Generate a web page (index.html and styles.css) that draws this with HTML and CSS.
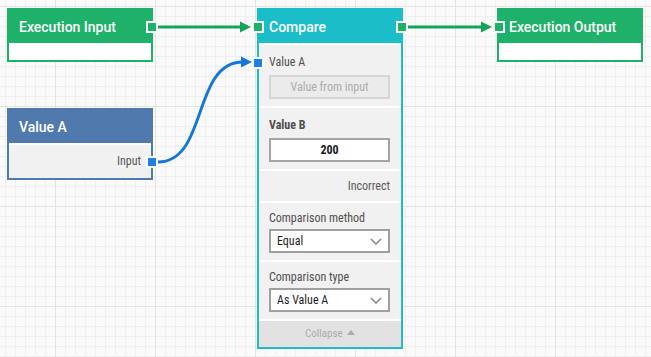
FILE: index.html
```html
<!DOCTYPE html>
<html>
<head>
<meta charset="utf-8">
<link rel="stylesheet" href="styles.css">
</head>
<body>
<div class="canvas">
  <svg class="edges" width="651" height="357" viewBox="0 0 651 357">
    <g class="edge-green">
      <line x1="158" y1="27" x2="243" y2="27"/>
      <polygon points="251,27 240,21.5 240,32.5"/>
      <line x1="408" y1="27" x2="484" y2="27"/>
      <polygon points="492,27 481,21.5 481,32.5"/>
    </g>
    <g class="edge-blue">
      <path d="M158,162 C208,162 192,62 243,62"/>
      <polygon points="252,62 241,56.5 241,67.5"/>
    </g>
  </svg>

  <div class="node node-exec node-exec-in">
    <div class="node-head">Execution Input<span class="port port-out port-green"></span></div>
    <div class="node-body node-body-empty"></div>
  </div>

  <div class="node node-value">
    <div class="node-head">Value A</div>
    <div class="node-body">
      <div class="row row-output">Input<span class="port port-out port-blue"></span></div>
    </div>
  </div>

  <div class="node node-compare">
    <div class="node-head"><span class="port port-in port-green"></span>Compare<span class="port port-out port-green"></span></div>
    <div class="node-body">
      <div class="row row-field">
        <div class="label label-port"><span class="port port-in port-blue"></span>Value A</div>
        <div class="field field-disabled">Value from input</div>
      </div>
      <div class="row row-field">
        <div class="label label-bold">Value B</div>
        <div class="field field-value">200</div>
      </div>
      <div class="row row-result">Incorrect</div>
      <div class="row row-select">
        <div class="label">Comparison method</div>
        <div class="select"><span>Equal</span><svg class="chev" width="12" height="7" viewBox="0 0 12 7"><polyline points="1,1 6,6 11,1"/></svg></div>
      </div>
      <div class="row row-select">
        <div class="label">Comparison type</div>
        <div class="select"><span>As Value A</span><svg class="chev" width="12" height="7" viewBox="0 0 12 7"><polyline points="1,1 6,6 11,1"/></svg></div>
      </div>
      <div class="collapse">Collapse <span class="tri"></span></div>
    </div>
  </div>

  <div class="node node-exec node-exec-out">
    <div class="node-head"><span class="port port-in port-green"></span>Execution Output</div>
    <div class="node-body node-body-empty"></div>
  </div>
</div>
</body>
</html>
```

FILE: styles.css
```css
html, body {
  margin: 0;
  padding: 0;
}
body {
  width: 651px;
  height: 357px;
  overflow: hidden;
  font-family: Roboto, "Noto Sans", sans-serif;
  font-stretch: 85%;
  background-color: #fafafa;
  background-image:
    linear-gradient(to right, #e3e3e3 1px, transparent 1px),
    linear-gradient(to bottom, #e3e3e3 1px, transparent 1px),
    linear-gradient(to right, #efefef 1px, transparent 1px),
    linear-gradient(to bottom, #efefef 1px, transparent 1px);
  background-size: 100px 100px, 100px 100px, 10px 10px, 10px 10px;
  background-position: 55px 0, 0 6px, 5px 0, 0 6px;
}
.canvas {
  position: relative;
  width: 651px;
  height: 357px;
}
.edges {
  position: absolute;
  left: 0;
  top: 0;
}
.edge-green line {
  stroke: #15a25a;
  stroke-width: 3;
}
.edge-green polygon {
  fill: #15a25a;
}
.edge-blue path {
  stroke: #1677d8;
  stroke-width: 3;
  fill: none;
}
.edge-blue polygon {
  fill: #1677d8;
}

.node {
  position: absolute;
  width: 146px;
  box-sizing: border-box;
  border: 2px solid var(--c);
  background: #fff;
}
.node-exec { --c: #1db16a; top: 8px; }
.node-exec-in { left: 7px; }
.node-exec-out { left: 497px; }
.node-compare { --c: #1bbec8; left: 257px; top: 8px; }
.node-value { --c: #5079ad; left: 7px; top: 108px; }

.node-head {
  position: relative;
  height: 32px;
  padding-top: 1px;
  line-height: 33px;
  padding-left: 10px;
  background: var(--c);
  color: #fff;
  font-size: 14px;
  font-weight: 500;
  font-stretch: 88%;
}
.node-body {
  display: flex;
  flex-direction: column;
  gap: 2px;
  padding-top: 2px;
  background: #fff;
}
.node-body-empty {
  height: 15px;
}

.port {
  position: absolute;
  width: 12px;
  height: 12px;
  box-sizing: border-box;
  border: 2px solid #fff;
}
.port-green { background: #1db16a; }
.port-blue { background: #1e80e0; }
.node-head .port { top: 11px; }
.node-head .port-out { right: -7px; }
.node-head .port-in { left: -7px; }
.node-exec-out .node-head .port-in { left: -6px; }

.row {
  position: relative;
  background: #f1f1f1;
  padding: 0 11px 0 10px;
  color: #555;
  font-size: 12px;
}
.row-output {
  height: 33px;
  line-height: 33px;
  text-align: right;
  padding-right: 10px;
  color: #555;
}
.row-output .port {
  top: 50%;
  right: -7px;
  transform: translateY(-50%);
}
.row-field {
  padding-top: 10px;
  padding-bottom: 7px;
}
.row-field .label {
  margin-bottom: 5px;
}
.row-select {
  padding-top: 8px;
  padding-bottom: 7px;
}
.row-select .label {
  margin-bottom: 3px;
}
.label {
  position: relative;
  line-height: 15px;
  color: #4f4f4f;
}
.label-bold {
  font-weight: 700;
}
.label-port .port {
  left: -17px;
  top: 50%;
  transform: translateY(-50%);
}
.field {
  height: 24px;
  box-sizing: border-box;
  border: 2px solid #a5a5a5;
  background: #fff;
  line-height: 20px;
  text-align: center;
}
.field-disabled {
  border-color: #d6d6d6;
  background: #ebebeb;
  color: #ababab;
}
.field-value {
  color: #1a1a1a;
  font-weight: 700;
}
.row-result {
  height: 30px;
  line-height: 30px;
  text-align: right;
  color: #5a5a5a;
}
.select {
  height: 24px;
  box-sizing: border-box;
  border: 2px solid #a0a0a0;
  background: #fff;
  display: flex;
  align-items: center;
  justify-content: space-between;
  padding: 0 6px 0 6px;
  color: #1e1e1e;
}
.chev polyline {
  fill: none;
  stroke: #8a8a8a;
  stroke-width: 1.6;
}
.collapse {
  height: 26px;
  line-height: 26px;
  background: #e2e2e2;
  color: #ababab;
  font-size: 11px;
  text-align: center;
}
.tri {
  display: inline-block;
  width: 0;
  height: 0;
  border-left: 4.5px solid transparent;
  border-right: 4.5px solid transparent;
  border-bottom: 5px solid #ababab;
  vertical-align: 2px;
  margin-left: 2px;
}
```
